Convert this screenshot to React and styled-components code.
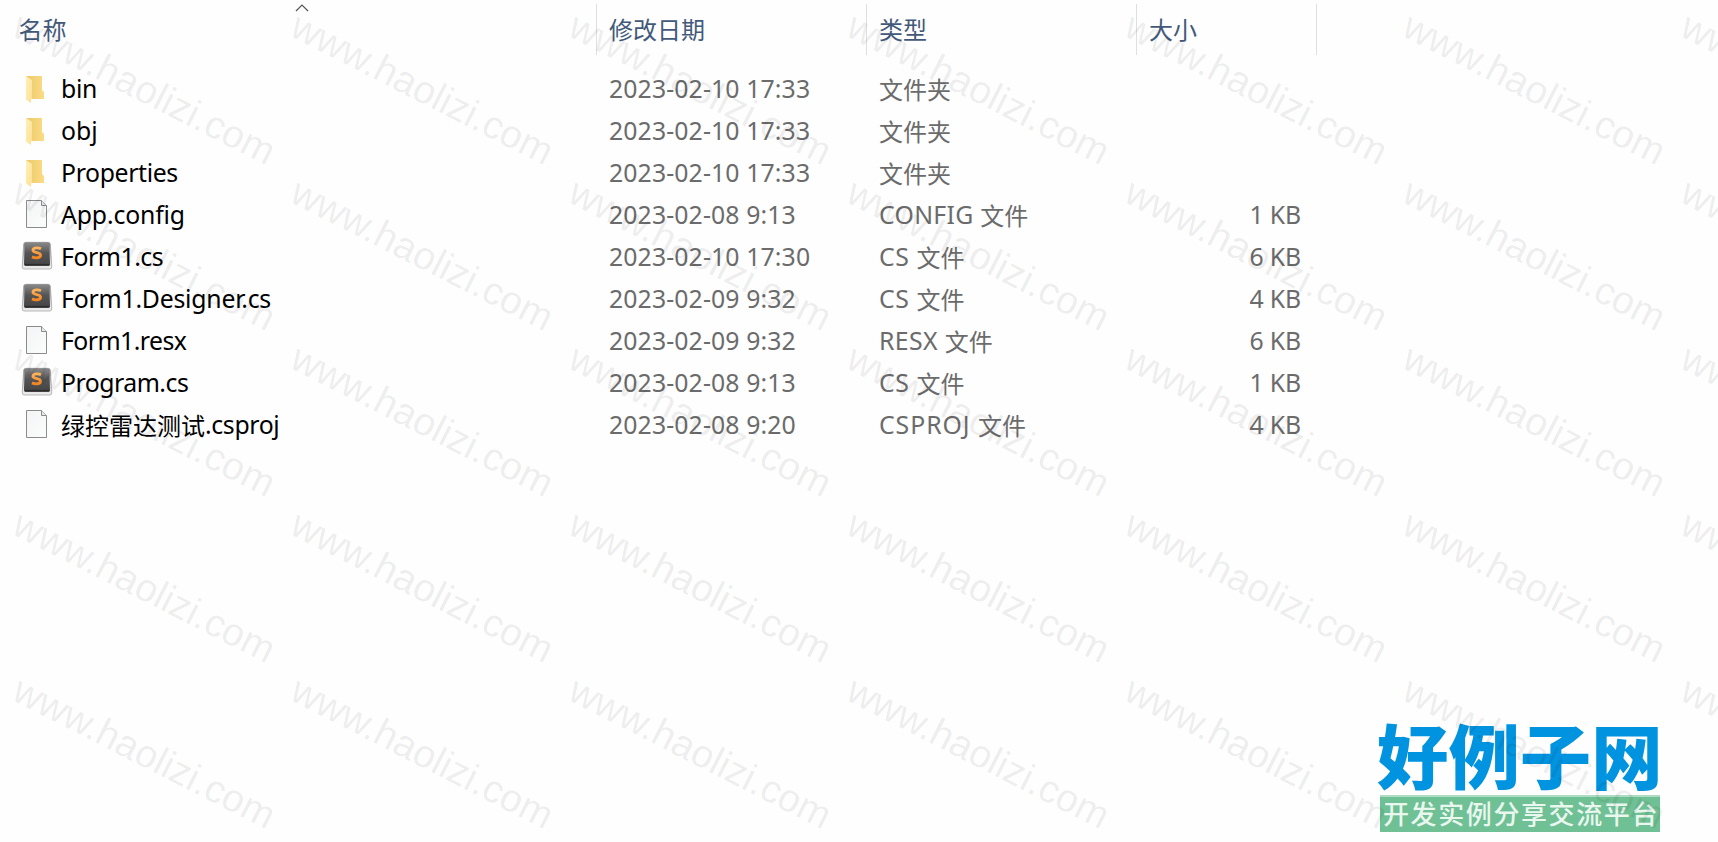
import React from 'react'
import styled, { createGlobalStyle } from 'styled-components';

// nameTrack / typeTrack: letter spacing of the latin part, in px
const files = [
    { icon: 'folder', name: 'bin', nameTrack: -0.3, date: '2023-02-10 17:33', type: '文件夹' },
    { icon: 'folder', name: 'obj', nameTrack: 0, date: '2023-02-10 17:33', type: '文件夹' },
    { icon: 'folder', name: 'Properties', nameTrack: -0.36, date: '2023-02-10 17:33', type: '文件夹' },
    { icon: 'page', name: 'App.config', nameTrack: -0.15, date: '2023-02-08 9:13', type: 'CONFIG 文件', typeTrack: 0.3, size: '1 KB' },
    { icon: 'sublime', name: 'Form1.cs', nameTrack: -0.47, date: '2023-02-10 17:30', type: 'CS 文件', typeTrack: 0.6, size: '6 KB' },
    { icon: 'sublime', name: 'Form1.Designer.cs', nameTrack: -0.22, date: '2023-02-09 9:32', type: 'CS 文件', typeTrack: 0.6, size: '4 KB' },
    { icon: 'page', name: 'Form1.resx', nameTrack: -0.55, date: '2023-02-09 9:32', type: 'RESX 文件', typeTrack: 0.4, size: '6 KB' },
    { icon: 'sublime', name: 'Program.cs', nameTrack: -0.5, date: '2023-02-08 9:13', type: 'CS 文件', typeTrack: 0.6, size: '1 KB' },
    { icon: 'page', name: '绿控雷达测试.csproj', nameTrack: -0.35, date: '2023-02-08 9:20', type: 'CSPROJ 文件', typeTrack: 0.95, size: '4 KB' },
];

const FolderIcon = () => (
    <Icon viewBox="0 0 32 32">
        <defs>
            <linearGradient id="folderBack" x1="0" y1="0" x2="1" y2="0">
                <stop offset="0" stopColor="#ecc869" />
                <stop offset="1" stopColor="#fbdc85" />
            </linearGradient>
            <linearGradient id="folderFlap" x1="0" y1="0" x2="1" y2="1">
                <stop offset="0" stopColor="#fff0bb" />
                <stop offset="1" stopColor="#fde08f" />
            </linearGradient>
        </defs>
        <path d="M5 3H21V17L23 19V26H9L5 6Z" fill="url(#folderBack)" />
        <path d="M5 3L11 7V26H10V30L5 26.5Z" fill="url(#folderFlap)" />
    </Icon>
);

const PageIcon = () => (
    <Icon viewBox="0 0 32 32">
        <defs>
            <linearGradient id="pageFill" x1="0" y1="0" x2="1" y2="1">
                <stop offset="0" stopColor="#f2f4f5" />
                <stop offset="1" stopColor="#fcfdfd" />
            </linearGradient>
        </defs>
        <path d="M5.5 1.5H20.5L25.5 6.5V28.5H5.5Z" fill="url(#pageFill)" stroke="#8b8b8b" />
        <path d="M20.5 1.5V6.5H25.5" fill="#e8e8e8" stroke="#8b8b8b" />
    </Icon>
);

const SublimeIcon = () => (
    <Icon viewBox="0 0 32 32">
        <defs>
            <linearGradient id="keyTop" x1="0" y1="0" x2="0" y2="1">
                <stop offset="0" stopColor="#8a8a8a" />
                <stop offset=".45" stopColor="#555" />
                <stop offset="1" stopColor="#444" />
            </linearGradient>
            <linearGradient id="keyEdge" x1="0" y1="0" x2="0" y2="1">
                <stop offset="0" stopColor="#777" />
                <stop offset=".6" stopColor="#d0d0d0" />
                <stop offset="1" stopColor="#eee" />
            </linearGradient>
            <linearGradient id="keyLetter" x1="0" y1="0" x2="0" y2="1">
                <stop offset="0" stopColor="#ffb45c" />
                <stop offset="1" stopColor="#f5841f" />
            </linearGradient>
        </defs>
        <path d="M5 1.300H27Q29 1.300 29.300 3L30.800 25Q31 28 29 28H3Q1 28 1.200 25L2.700 3Q3 1.300 5 1.300Z" fill="url(#keyEdge)" stroke="#9c9c9c" strokeWidth=".7" />
        <path d="M5 1.400H27Q28 1.700 28.200 3L29 22Q29 25 27.500 25H4.500Q3 25 3 22L3.800 3Q4 1.700 5 1.400Z" fill="url(#keyTop)" />
        <path d="M3.500 23.500H28.500" stroke="#2c2c2c" strokeWidth="1.200" />
        <path d="M20 7.700C17.200 6.400 12 6.400 12 9.300C12 12.400 19.600 10.800 19.600 14.200C19.600 17.400 14.200 17.400 11 15.900" fill="none" stroke="url(#keyLetter)" strokeWidth="2.900" />
    </Icon>
);

const icons = { folder: FolderIcon, page: PageIcon, sublime: SublimeIcon };

// Chinese runs are set a little smaller than the latin ones
const Label = ({ text }) => text.split(/([\u4e00-\u9fff]+)/).filter(Boolean).map((part, i) => (
    /[\u4e00-\u9fff]/.test(part) ? <Han key={i}>{part}</Han> : <span key={i}>{part}</span>
));

const FileRow = ({ file }) => {
    const FileIcon = icons[file.icon];
    return (
        <Row>
            <NameCell>
                <FileIcon />
                <Text $dark $track={file.nameTrack}><Label text={file.name} /></Text>
            </NameCell>
            <Cell><Text $track={0.12}>{file.date}</Text></Cell>
            <Cell><Text $track={file.typeTrack}><Label text={file.type} /></Text></Cell>
            <Cell $right><Text $track={-0.15}>{file.size}</Text></Cell>
        </Row>
    )
}

const App = () => (
    <Window>
        <GlobalStyle />
        <Header>
            <HeadCell $first>
                名称
                <SortArrow viewBox="0 0 14 8"><path d="M1 7L7 1L13 7" fill="none" stroke="#555" strokeWidth="1.200" /></SortArrow>
            </HeadCell>
            <HeadCell>修改日期</HeadCell>
            <HeadCell>类型</HeadCell>
            <HeadCell>大小</HeadCell>
        </Header>
        <List>
            {files.map(file => <FileRow key={file.name} file={file} />)}
        </List>
        <Brand>
            <BrandName>好例子网</BrandName>
            <BrandSlogan>开发实例分享交流平台</BrandSlogan>
        </Brand>
        <Watermark>
            {Array.from({ length: 35 }, (_, i) => <Mark key={i}><span>www.haolizi.com</span></Mark>)}
        </Watermark>
    </Window>
);

export default App;

const GlobalStyle = createGlobalStyle`
  body {
    margin: 0;
    background: #fefefe;
    overflow: hidden;
  }
`;

const columns = '597px 270px 270px 180px';

const Window = styled.div`
  position: relative;
  display: flex;
  flex-direction: column;
  box-sizing: border-box;
  width: 1718px;
  height: 842px;
  overflow: hidden;
  font-family: "Noto Sans", "Noto Sans CJK SC", sans-serif;
`;

const Header = styled.div`
  display: grid;
  grid-template-columns: ${columns};
  padding-top: 4px;
`;

const HeadCell = styled.div`
  position: relative;
  box-sizing: border-box;
  height: 51px;
  padding-left: ${props => (props.$first ? '18.5px' : '12px')};
  border-right: 1px solid #dfdfdf;
  color: #43597a;
  font-family: "Noto Sans CJK SC", sans-serif;
  font-size: 24px;
  line-height: 50px;
`;

const SortArrow = styled.svg`
  position: absolute;
  top: 0;
  left: 294.5px;
  width: 14px;
  height: 8px;
`;

const List = styled.div`
  padding-top: 13px;
`;

const Row = styled.div`
  display: grid;
  grid-template-columns: ${columns};
  height: 42px;
`;

const Cell = styled.div`
  display: flex;
  align-items: center;
  justify-content: ${props => (props.$right ? 'flex-end' : 'flex-start')};
  padding: 0 ${props => (props.$right ? '16px' : '0')} 0 12px;
`;

const NameCell = styled.div`
  display: flex;
  align-items: center;
  gap: 8px;
  padding-left: 21px;
`;

const Icon = styled.svg`
  flex: none;
  width: 32px;
  height: 32px;
`;

const Text = styled.span`
  padding-bottom: 2px;
  color: ${props => (props.$dark ? '#000' : '#6b6b6b')};
  font-size: 24.8px;
  letter-spacing: ${props => props.$track || 0}px;
  line-height: 40px;
  white-space: pre;
`;

const Han = styled.span`
  font-family: "Noto Sans CJK SC", sans-serif;
  font-size: 24px;
  letter-spacing: 0;
  line-height: 1;
  vertical-align: -1px;
`;

const Brand = styled.div`
  display: flex;
  flex-direction: column;
  width: 280px;
  margin: auto 58px 10px auto;
`;

const BrandName = styled.div`
  height: 76px;
  margin-left: -3px;
  color: #0093df;
  font-family: "Noto Sans CJK SC", sans-serif;
  font-size: 70px;
  font-weight: 900;
  line-height: 70px;
  white-space: nowrap;
  transform: scaleX(1.02);
  transform-origin: 0 0;
`;

const BrandSlogan = styled.div`
  box-sizing: border-box;
  height: 37px;
  padding-left: 3px;
  border-top: 2px solid #aedcc2;
  background: #6fc094;
  color: #e9f7ef;
  font-family: "Noto Sans CJK SC", sans-serif;
  font-size: 26px;
  font-weight: 500;
  letter-spacing: 1.6px;
  line-height: 31px;
  white-space: nowrap;
`;

const Watermark = styled.div`
  position: absolute;
  inset: 0;
  display: grid;
  grid-template-columns: repeat(7, 278px);
  grid-auto-rows: 166px;
  pointer-events: none;
`;

const Mark = styled.div`
  padding: 2px 0 0 9.5px;
  color: rgba(0, 0, 0, 0.08);
  font-family: "Liberation Sans", Arial, sans-serif;
  font-size: 39px;
  line-height: 40px;
  white-space: nowrap;

  span {
    display: inline-block;
    transform: rotate(27deg);
    transform-origin: 0 33px;
  }
`;
